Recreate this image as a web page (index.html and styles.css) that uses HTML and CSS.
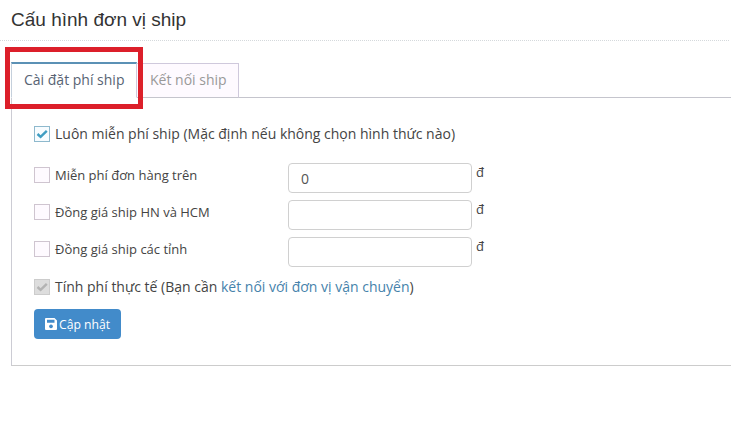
FILE: index.html
```html
<!DOCTYPE html>
<html lang="vi">
<head>
  <meta charset="UTF-8" />
  <meta name="viewport" content="width=device-width, initial-scale=1.0"/>
  <title>Cấu hình đơn vị ship</title>
  <link rel="stylesheet" href="styles.css">
</head>
<body>
  <h1 class="page-header">Cấu hình đơn vị ship</h1>

  <div class="tabs">
    <a class="tab active">Cài đặt phí ship<span class="highlight"></span></a>
    <a class="tab">Kết nối ship</a>
  </div>

  <form class="panel">
    <div class="row row-large row-first">
      <span class="check checked">
        <svg viewBox="0 0 14 14"><path d="M2.500 7 L5.600 9.900 L11.800 3.800"/></svg>
      </span>
      <label>Luôn miễn phí ship (Mặc định nếu không chọn hình thức nào)</label>
    </div>

    <div class="row">
      <span class="check"></span>
      <label class="field-label">Miễn phí đơn hàng trên</label>
      <input class="field" type="text" value="0">
      <span class="unit">đ</span>
    </div>
    <div class="row">
      <span class="check"></span>
      <label class="field-label">Đồng giá ship HN và HCM</label>
      <input class="field" type="text">
      <span class="unit">đ</span>
    </div>
    <div class="row">
      <span class="check"></span>
      <label class="field-label">Đồng giá ship các tỉnh</label>
      <input class="field" type="text">
      <span class="unit">đ</span>
    </div>

    <div class="row row-large row-last">
      <span class="check disabled">
        <svg viewBox="0 0 14 14"><path d="M2.500 7 L5.600 9.900 L11.800 3.800"/></svg>
      </span>
      <label>Tính phí thực tế (Bạn cần <a class="link">kết nối với đơn vị vận chuyển</a>)</label>
    </div>

    <button class="btn" type="button">
      <svg class="icon-save" viewBox="0 0 12 12">
        <path fill-rule="evenodd" d="M1 0h8.500L12 2.500V11a1 1 0 0 1-1 1H1a1 1 0 0 1-1-1V1a1 1 0 0 1 1-1zM2 1.700v3h7.500v-3zM6 6.500a1.900 1.900 0 1 0 .01 0z"/>
      </svg>
      <span>Cập nhật</span>
    </button>
  </form>
</body>
</html>
```

FILE: styles.css
```css
* {
  box-sizing: border-box;
}
body {
  margin: 0;
  background: #fff;
  color: #444;
  font-family: "Open Sans", "Noto Sans", sans-serif;
  font-size: 13px;
  overflow: hidden;
}
.page-header {
  margin: 0 2px 0 0;
  height: 41px;
  padding: 9px 0 0 11px;
  border-bottom: 1px dotted #d5d9dc;
  color: #333;
  font-family: "Liberation Sans", Arial, sans-serif;
  font-size: 19px;
  font-weight: normal;
  line-height: 22px;
}
.tabs {
  display: flex;
  align-items: flex-end;
  height: 57px;
  margin-left: 11px;
  border-bottom: 1px solid #c5c5cd;
}
.tab {
  width: 102px;
  height: 35px;
  padding-left: 13px;
  border: 1px solid #cfc9dc;
  border-left: 0;
  border-bottom: 1px solid #c5c5cd;
  margin-bottom: -1px;
  background: #fefaff;
  color: #999;
  font-size: 14px;
  line-height: 32px;
  white-space: nowrap;
}
.tab.active {
  position: relative;
  width: 126px;
  height: 36px;
  padding-left: 12px;
  border-left: 1px solid #c5d0dc;
  border-top: 2px solid #5b91b5;
  border-bottom-color: #fff;
  background: #fff;
  color: #576373;
}
.highlight {
  position: absolute;
  top: -17px;
  left: -7px;
  width: 138px;
  height: 62px;
  border: 5px solid #dc1f2a;
}
.panel {
  height: 268px;
  margin-left: 11px;
  padding: 28px 0 0 22px;
  border-left: 1px solid #ccccd4;
  border-bottom: 1px solid #ccc;
}
.row {
  display: flex;
  align-items: flex-start;
  height: 30px;
  margin-bottom: 7px;
}
.row label {
  margin-left: 5px;
  line-height: 18px;
  white-space: nowrap;
}
.row .check {
  margin-top: 4px;
}
.row .field-label {
  width: 233px;
  margin-top: 3px;
}
.row-large {
  height: 18px;
  font-size: 14px;
}
.row-large .check {
  margin-top: 0;
}
.row-large label {
  margin-top: -1px;
}
.row-first {
  margin-bottom: 19px;
}
.row-last {
  margin: 12px 0;
}
.check {
  flex: none;
  width: 16px;
  height: 16px;
  border: 1px solid #cfc5d0;
  background: #fefaff;
}
.check svg {
  display: block;
  width: 14px;
  height: 14px;
  fill: none;
  stroke: #3f9dc2;
  stroke-width: 2.4;
}
.check.checked {
  border-color: #8eb9cd;
  background: #f7fcff;
}
.check.disabled {
  border-color: #ccc;
  background: #ddd;
}
.check.disabled svg {
  stroke: #b3b3b3;
}
.field {
  width: 184px;
  height: 30px;
  padding: 0 12px;
  border: 1px solid #d0d0d0;
  border-radius: 4px;
  background: #fff;
  color: #555;
  font-family: inherit;
  font-size: 14px;
}
.unit {
  margin-left: 4px;
  line-height: 19px;
}
.link {
  color: #4682ab;
}
.btn {
  display: flex;
  align-items: center;
  gap: 2px;
  width: 87px;
  height: 30px;
  padding: 0 0 0 11px;
  border: 0;
  border-radius: 4px;
  background: #428bca;
  color: #fff;
  font-family: inherit;
  font-size: 12.2px;
  white-space: nowrap;
}
.icon-save {
  flex: none;
  width: 12px;
  height: 12px;
  fill: #fff;
}
```
